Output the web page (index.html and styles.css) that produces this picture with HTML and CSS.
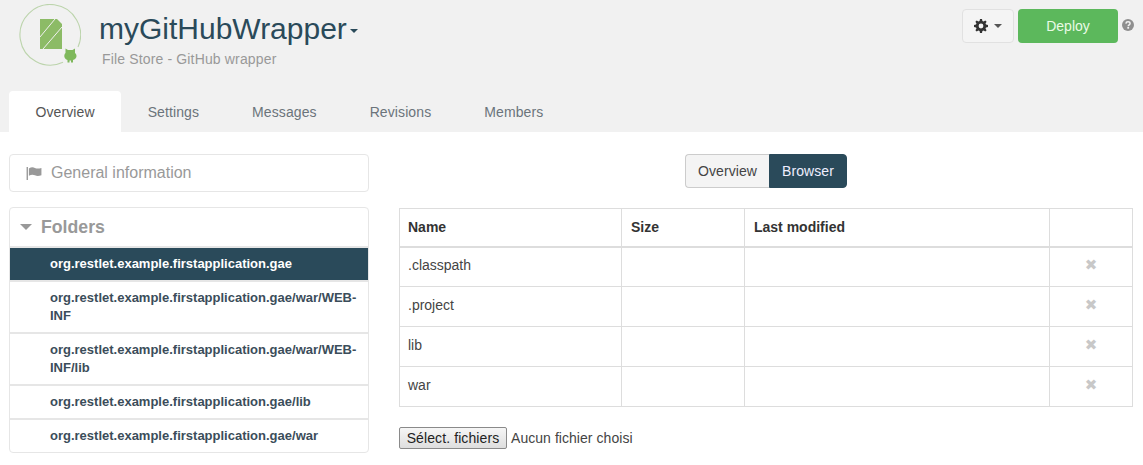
FILE: index.html
```html
<!DOCTYPE html>
<html lang="fr">

<head>
    <meta charset="UTF-8">
    <title>myGitHubWrapper</title>
    <link rel="stylesheet" href="styles.css">
</head>

<body>
    <header class="top">
        <div class="top-row">
            <svg class="logo" width="62" height="62" viewBox="0 0 62 62">
                <path d="M59 43A30.3 30.3 0 1 0 44 58.3" fill="none" stroke="#bcd4ac" stroke-width="1.1" />
                <path d="M21 15H38L43 20V45H21Z" fill="#8cbb66" />
                <path d="M21 33L36 15M24 45L43 23" stroke="#f1f1f1" stroke-width="1" />
                <path d="M46.500 44.500L49 46H53.500L56 44.500V49C58.500 51 58 55 54 56V58.500H52V56.500H50.500V58.500H48.500V56C45 55 44.500 51 46.500 49Z" fill="#7fb85c" />
            </svg>
            <div class="titles">
                <h1 class="app-name">myGitHubWrapper<span class="name-caret"></span></h1>
                <p class="app-type">File Store - GitHub wrapper</p>
            </div>
            <div class="actions">
                <button class="btn-gear">
                    <svg width="14" height="14" viewBox="0 0 14 14">
                        <path d="M6 0H8L8.4 2A5 5 0 0 1 9.6 2.5L11.3 1.4L12.6 2.7L11.5 4.4A5 5 0 0 1 12 5.6L14 6V8L12 8.4A5 5 0 0 1 11.5 9.6L12.6 11.3L11.3 12.6L9.6 11.5A5 5 0 0 1 8.4 12L8 14H6L5.6 12A5 5 0 0 1 4.4 11.5L2.7 12.6L1.4 11.3L2.5 9.6A5 5 0 0 1 2 8.4L0 8V6L2 5.6A5 5 0 0 1 2.5 4.4L1.4 2.7L2.7 1.4L4.4 2.5A5 5 0 0 1 5.6 2ZM7 4.6A2.4 2.4 0 1 0 7 9.4A2.4 2.4 0 1 0 7 4.6Z" fill="#333" fill-rule="evenodd" />
                    </svg>
                    <span class="gear-caret"></span>
                </button>
                <button class="btn-deploy">Deploy</button>
                <svg class="help" width="12" height="12" viewBox="0 0 12 12">
                    <circle cx="6" cy="6" r="6" fill="#8f8f8f" />
                    <path d="M3.9 4.6C4 3.400 4.900 2.800 6 2.800C7.200 2.800 8.100 3.500 8.100 4.500C8.100 5.900 6.200 5.800 6.200 7.200" fill="none" stroke="#f1f1f1" stroke-width="1.5" />
                    <rect x="5.300" y="8" width="1.800" height="1.700" fill="#f1f1f1" />
                </svg>
            </div>
        </div>
        <nav class="tabs">
            <a class="tab active">Overview</a>
            <a class="tab">Settings</a>
            <a class="tab">Messages</a>
            <a class="tab">Revisions</a>
            <a class="tab">Members</a>
        </nav>
    </header>

    <main class="content">
        <aside class="side">
            <div class="panel info">
                <svg width="16" height="13" viewBox="0 0 16 14">
                    <path d="M0 0H1.500V14H0ZM2.500 1.500C5 0 7 0 9 1C11 2 13 1.800 16 1V9C13 10 11 10 9 9C7 8 5 8 2.500 9.500Z" fill="#999" />
                </svg>
                General information
            </div>
            <div class="panel folders">
                <div class="folders-head"><span class="head-caret"></span>Folders</div>
                <ul class="folder-list">
                    <li class="selected">org.restlet.example.firstapplication.gae</li>
                    <li>org.restlet.example.firstapplication.gae/war/WEB-INF</li>
                    <li>org.restlet.example.firstapplication.gae/war/WEB-INF/lib</li>
                    <li>org.restlet.example.firstapplication.gae/lib</li>
                    <li>org.restlet.example.firstapplication.gae/war</li>
                </ul>
            </div>
        </aside>

        <section class="browser">
            <div class="switch">
                <button class="switch-btn">Overview</button>
                <button class="switch-btn on">Browser</button>
            </div>

            <table class="files">
                <thead>
                    <tr>
                        <th class="col-name">Name</th>
                        <th class="col-size">Size</th>
                        <th class="col-date">Last modified</th>
                        <th></th>
                    </tr>
                </thead>
                <tbody>
                    <tr><td>.classpath</td><td></td><td></td><td class="del">✖</td></tr>
                    <tr><td>.project</td><td></td><td></td><td class="del">✖</td></tr>
                    <tr><td>lib</td><td></td><td></td><td class="del">✖</td></tr>
                    <tr><td>war</td><td></td><td></td><td class="del">✖</td></tr>
                </tbody>
            </table>

            <div class="upload">
                <button class="pick">Sélect. fichiers</button>
                <span>Aucun fichier choisi</span>
            </div>
        </section>
    </main>
</body>

</html>
```

FILE: styles.css
```css
* {
    margin: 0;
    padding: 0;
    box-sizing: border-box;
}

body {
    font-family: "Liberation Sans", Arial, sans-serif;
    font-size: 14px;
    color: #333;
    background-color: white;
    overflow: hidden;
}

button {
    font-family: inherit;
}

/* header */
.top {
    height: 132px;
    padding: 0 9px;
    background-color: #f1f1f1;
    display: flex;
    flex-direction: column;
    justify-content: space-between;
}

.top-row {
    display: flex;
    align-items: flex-start;
    padding-top: 4px;
}

.logo {
    margin-left: 10px;
    flex: none;
}

.titles {
    margin-left: 18px;
}

.app-name {
    font-size: 30px;
    font-weight: normal;
    line-height: 40px;
    margin-top: 5px;
    color: #2a4a5a;
}

.name-caret {
    display: inline-block;
    margin-left: 3px;
    vertical-align: middle;
    border-top: 4px solid #2a4a5a;
    border-left: 4px solid transparent;
    border-right: 4px solid transparent;
}

.app-type {
    margin-left: 3px;
    line-height: 20px;
    letter-spacing: 0.15px;
    color: #999;
}

.actions {
    margin-left: auto;
    margin-top: 5px;
    display: flex;
    align-items: flex-start;
}

.btn-gear {
    width: 52px;
    height: 34px;
    background-color: #f4f4f4;
    border: 1px solid #e1e1e1;
    border-radius: 4px;
    display: flex;
    align-items: center;
    justify-content: center;
    gap: 6px;
}

.gear-caret {
    border-top: 4px solid #555;
    border-left: 4px solid transparent;
    border-right: 4px solid transparent;
}

.btn-deploy {
    width: 100px;
    height: 34px;
    margin-left: 4px;
    background-color: #5cb85c;
    color: #eafbe6;
    font-size: 14px;
    border: none;
    border-radius: 4px;
}

.help {
    margin: 10px 0 0 4px;
}

.tabs {
    display: flex;
}

.tab {
    height: 41px;
    padding: 1px 26.5px 0;
    line-height: 41px;
    letter-spacing: 0.1px;
    color: #6b747b;
    border-radius: 4px 4px 0 0;
}

.tab.active {
    background-color: white;
    color: #555;
}

/* main part */
.content {
    display: flex;
    align-items: flex-start;
    padding: 22px 10px 0 9px;
    gap: 30px;
}

.side {
    width: 360px;
    flex: none;
}

.panel {
    border: 1px solid #e6e6e6;
    border-radius: 4px;
}

.info {
    height: 38px;
    padding-left: 16px;
    display: flex;
    align-items: center;
    gap: 9px;
    font-size: 16px;
    color: #999;
}

.folders {
    margin-top: 15px;
    overflow: hidden;
}

.folders-head {
    height: 38px;
    padding-left: 10px;
    display: flex;
    align-items: center;
    font-size: 17.7px;
    font-weight: bold;
    color: #999;
}

.head-caret {
    margin-right: 9px;
    border-top: 6px solid #999;
    border-left: 6px solid transparent;
    border-right: 6px solid transparent;
}

.folder-list {
    list-style: none;
    font-size: 13px;
    font-weight: bold;
    line-height: 18px;
    color: #3b4d5a;
}

.folder-list li {
    padding: 7px 10px 7px 40px;
    border-top: 2px solid #e6e6e6;
}

.folder-list li.selected {
    background-color: #2a4a5a;
    color: white;
}

.browser {
    flex: 1;
}

.switch {
    display: flex;
    justify-content: center;
}

.switch-btn {
    width: 84px;
    height: 34px;
    font-size: 14px;
    letter-spacing: 0.1px;
    background-color: #f4f4f4;
    color: #444;
    border: 1px solid #ccc;
    border-right: none;
    border-radius: 4px 0 0 4px;
}

.switch-btn.on {
    width: 78px;
    background-color: #2a4a5a;
    color: #eef;
    border: 1px solid #2a4a5a;
    border-radius: 0 4px 4px 0;
}

.files {
    width: 734px;
    margin-top: 20px;
    border-collapse: collapse;
    table-layout: fixed;
}

.files th,
.files td {
    border: 1px solid #ddd;
    padding: 0 8px;
    text-align: left;
    color: #444;
}

.files th {
    height: 38px;
    font-size: 14px;
    color: #333;
    border-bottom-width: 2px;
}

.files td {
    height: 40px;
    padding-bottom: 4px;
}

.col-name {
    width: 222px;
}

.files .col-size {
    width: 123px;
    padding-left: 9px;
}

.files .col-date {
    width: 305px;
    padding-left: 9px;
}

.files td.del {
    text-align: center;
    font-size: 15px;
    color: #c8c8c8;
    font-family: "DejaVu Sans", sans-serif;
}

.upload {
    margin-top: 20px;
    display: flex;
    align-items: center;
    gap: 4px;
    letter-spacing: 0.05px;
    color: #444;
}

.pick {
    width: 108px;
    height: 22px;
    font-size: 14px;
    letter-spacing: 0.1px;
    color: #222;
    background: linear-gradient(#f6f6f6, #dedede);
    border: 1px solid #8a8a8a;
    border-radius: 2px;
}
```
